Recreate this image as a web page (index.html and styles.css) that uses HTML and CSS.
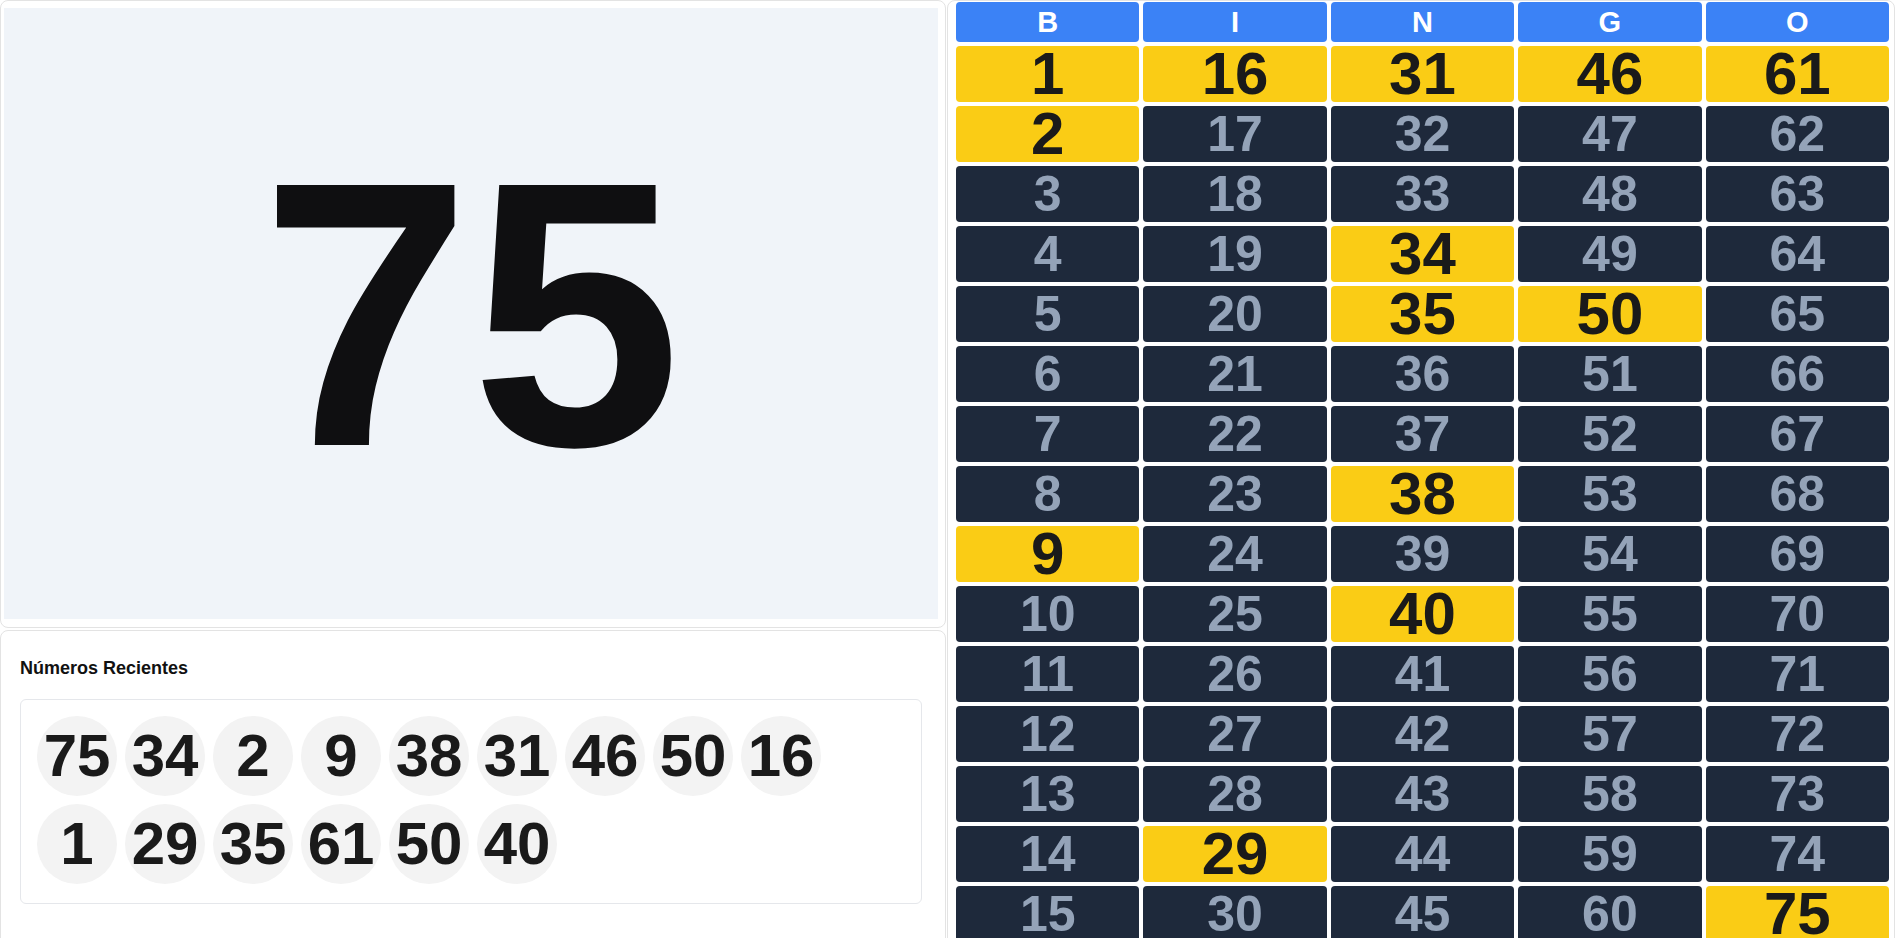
FILE: index.html
```html
<!DOCTYPE html>
<html lang="es">
<head>
<meta charset="utf-8">
<title>Bingo</title>
<link rel="stylesheet" href="styles.css">
</head>
<body>
<div class="app">
  <div class="left">
    <section class="panel current-panel">
      <div class="current"><span class="current-num">75</span></div>
    </section>
    <section class="panel recent-panel">
      <h3 class="recent-title">Números Recientes</h3>
      <div class="recent-box">
        <div class="ball">75</div>
        <div class="ball">34</div>
        <div class="ball">2</div>
        <div class="ball">9</div>
        <div class="ball">38</div>
        <div class="ball">31</div>
        <div class="ball">46</div>
        <div class="ball">50</div>
        <div class="ball">16</div>
        <div class="ball">1</div>
        <div class="ball">29</div>
        <div class="ball">35</div>
        <div class="ball">61</div>
        <div class="ball">50</div>
        <div class="ball">40</div>
      </div>
    </section>
  </div>
  <section class="panel board-panel">
    <div class="board">
      <div class="head">B</div><div class="head">I</div><div class="head">N</div><div class="head">G</div><div class="head">O</div>
      <div class="cell on">1</div><div class="cell on">16</div><div class="cell on">31</div><div class="cell on">46</div><div class="cell on">61</div>
      <div class="cell on">2</div><div class="cell">17</div><div class="cell">32</div><div class="cell">47</div><div class="cell">62</div>
      <div class="cell">3</div><div class="cell">18</div><div class="cell">33</div><div class="cell">48</div><div class="cell">63</div>
      <div class="cell">4</div><div class="cell">19</div><div class="cell on">34</div><div class="cell">49</div><div class="cell">64</div>
      <div class="cell">5</div><div class="cell">20</div><div class="cell on">35</div><div class="cell on">50</div><div class="cell">65</div>
      <div class="cell">6</div><div class="cell">21</div><div class="cell">36</div><div class="cell">51</div><div class="cell">66</div>
      <div class="cell">7</div><div class="cell">22</div><div class="cell">37</div><div class="cell">52</div><div class="cell">67</div>
      <div class="cell">8</div><div class="cell">23</div><div class="cell on">38</div><div class="cell">53</div><div class="cell">68</div>
      <div class="cell on">9</div><div class="cell">24</div><div class="cell">39</div><div class="cell">54</div><div class="cell">69</div>
      <div class="cell">10</div><div class="cell">25</div><div class="cell on">40</div><div class="cell">55</div><div class="cell">70</div>
      <div class="cell">11</div><div class="cell">26</div><div class="cell">41</div><div class="cell">56</div><div class="cell">71</div>
      <div class="cell">12</div><div class="cell">27</div><div class="cell">42</div><div class="cell">57</div><div class="cell">72</div>
      <div class="cell">13</div><div class="cell">28</div><div class="cell">43</div><div class="cell">58</div><div class="cell">73</div>
      <div class="cell">14</div><div class="cell on">29</div><div class="cell">44</div><div class="cell">59</div><div class="cell">74</div>
      <div class="cell">15</div><div class="cell">30</div><div class="cell">45</div><div class="cell">60</div><div class="cell on">75</div>
    </div>
  </section>
</div>
</body>
</html>
```

FILE: styles.css
```css
* { box-sizing: border-box; }

html, body {
  margin: 0;
  padding: 0;
  height: 100%;
  overflow: hidden;
  background: #ffffff;
}

body {
  font-family: "Liberation Sans", Arial, sans-serif;
  font-weight: bold;
  color: #1a1a1a;
}

.app {
  display: flex;
  align-items: flex-start;
  gap: 1px;
}

.left {
  width: 946px;
  flex: none;
  display: flex;
  flex-direction: column;
  gap: 2px;
}

.panel {
  background: #ffffff;
  border: 1px solid #e3e3e3;
  border-radius: 8px;
}

.current-panel {
  height: 628px;
  padding: 7px 7px 8px 3px;
  display: flex;
}

.current {
  flex: 1;
  background: #f0f4f9;
  display: flex;
  align-items: center;
  justify-content: center;
}

.current-num {
  font-size: 378px;
  line-height: 1;
  color: #0f0f11;
}

.recent-panel {
  height: 330px;
  padding: 27px 23px 0 19px;
}

.recent-title {
  margin: 0 0 20px 0;
  font-size: 18px;
  font-weight: bold;
  color: #111111;
  line-height: normal;
}

.recent-box {
  border: 1px solid #e5e7eb;
  border-radius: 6px;
  padding: 16px 16px 19px 16px;
  display: flex;
  flex-wrap: wrap;
  gap: 8px;
}

.ball {
  width: 80px;
  height: 80px;
  border-radius: 50%;
  background: #f3f3f3;
  display: flex;
  align-items: center;
  justify-content: center;
  font-size: 60px;
  line-height: 1;
  color: #1a1a1a;
}

.board-panel {
  flex: 1;
  padding: 1px 5px 8px 8px;
}

.board {
  display: grid;
  grid-template-columns: repeat(5, 1fr);
  grid-template-rows: 40px repeat(15, 56px);
  gap: 4px;
}

.head {
  background: #3b82f6;
  color: #ffffff;
  font-size: 29px;
  line-height: 1;
  border-radius: 4px;
  display: flex;
  align-items: center;
  justify-content: center;
}

.cell {
  background: #1e293b;
  color: #94a3b8;
  font-size: 50px;
  line-height: 1;
  border-radius: 4px;
  display: flex;
  align-items: center;
  justify-content: center;
}

.cell.on {
  background: #facc15;
  color: #1a1a1a;
  font-size: 60px;
}
```
